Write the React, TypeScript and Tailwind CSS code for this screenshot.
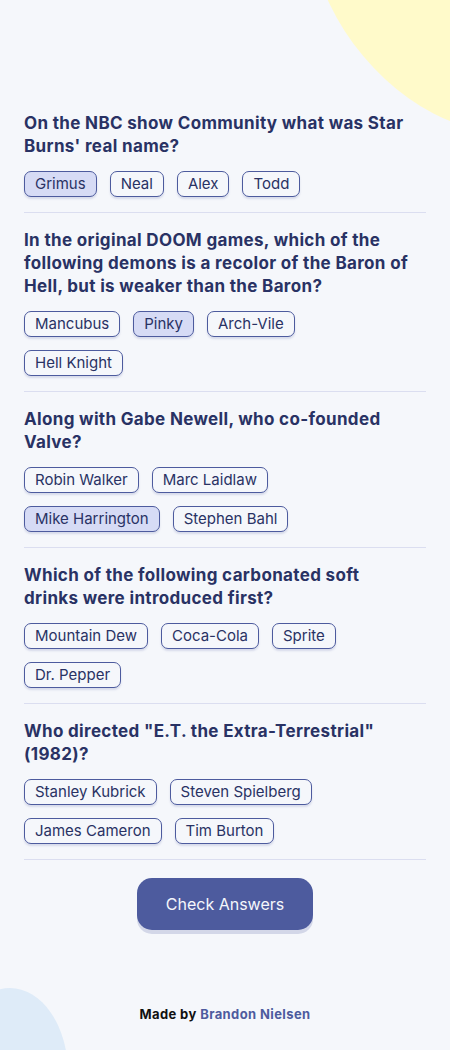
const quiz = [
  {
    question: "On the NBC show Community what was Star Burns' real name?",
    answers: ["Grimus", "Neal", "Alex", "Todd"],
    picked: "Grimus",
  },
  {
    question:
      "In the original DOOM games, which of the following demons is a recolor of the Baron of Hell, but is weaker than the Baron?",
    answers: ["Mancubus", "Pinky", "Arch-Vile", "Hell Knight"],
    picked: "Pinky",
  },
  {
    question: "Along with Gabe Newell, who co-founded Valve?",
    answers: ["Robin Walker", "Marc Laidlaw", "Mike Harrington", "Stephen Bahl"],
    picked: "Mike Harrington",
  },
  {
    question: "Which of the following carbonated soft drinks were introduced first?",
    answers: ["Mountain Dew", "Coca-Cola", "Sprite", "Dr. Pepper"],
    picked: "",
  },
  {
    question: 'Who directed "E.T. the Extra-Terrestrial" (1982)?',
    answers: ["Stanley Kubrick", "Steven Spielberg", "James Cameron", "Tim Burton"],
    picked: "",
  },
];

export default function App() {
  return (
    <div className="relative min-h-[1050px] overflow-hidden bg-[#f5f7fb] font-['Inter',sans-serif] text-[#293264]">
      {/* blobs */}
      <div className="absolute left-[280px] top-[-108px] h-[200px] w-[320px] rotate-[50deg] rounded-[50%] bg-[#fffaca]" />
      <div className="absolute bottom-[-108px] left-[-48px] h-[170px] w-[116px] rounded-[50%] bg-[#deebf8]" />

      <main className="relative px-6 pt-[112px]">
        {quiz.map((q) => (
          <section key={q.question} className="border-b border-[#dbdef0] pb-[15px] pt-4 first:pt-0">
            <h2 className="pr-4 text-[17px] font-bold leading-[23px] tracking-[0.02em]">
              {q.question}
            </h2>
            <div className="mt-[13px] flex flex-wrap gap-x-[13px] gap-y-[13px] pr-6">
              {q.answers.map((a) => (
                <button
                  key={a}
                  className={`h-[26px] rounded-[7px] border border-[#4d5b9e] px-[10px] text-[15px] leading-[24px] shadow-[0_2px_2px_rgba(77,91,158,0.18)] ${
                    a === q.picked ? "bg-[#d6dbf5]" : "bg-[#f5f7fb]"
                  }`}
                >
                  {a}
                </button>
              ))}
            </div>
          </section>
        ))}

        <div className="flex justify-center pt-[18px]">
          <button className="h-[52px] w-[176px] rounded-[15px] bg-[#4d5b9e] text-[16px] text-[#f5f7fb] shadow-[0_4px_0_rgba(77,91,158,0.2)]">
            Check Answers
          </button>
        </div>

        <p className="pt-[75px] text-center text-[13px] font-bold tracking-[0.03em] text-[#111]">
          Made by <span className="text-[#4d5b9e]">Brandon Nielsen</span>
        </p>
      </main>
    </div>
  );
}
